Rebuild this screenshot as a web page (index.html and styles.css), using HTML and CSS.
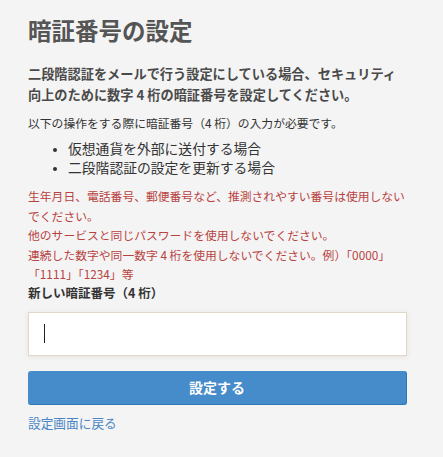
FILE: index.html
```html
<!DOCTYPE html>
<html lang="ja">
<head>
    <meta charset="UTF-8">
    <meta name="viewport" content="width=device-width, initial-scale=1.0">
    <title>暗証番号の設定</title>
    <link rel="stylesheet" href="styles.css">
</head>
<body>
    <div class="container">
        <h1>暗証番号の設定</h1>

        <p class="lead">二段階認証をメールで行う設定にしている場合、セキュリティ向上のために数字 4 桁の暗証番号を設定してください。</p>

        <p class="note">以下の操作をする際に暗証番号（4 桁）の入力が必要です。</p>
        <ul class="cases">
            <li>仮想通貨を外部に送付する場合</li>
            <li>二段階認証の設定を更新する場合</li>
        </ul>

        <div class="warnings">
            <p>生年月日、電話番号、郵便番号など、推測されやすい番号は使用しないでください。</p>
            <p>他のサービスと同じパスワードを使用しないでください。</p>
            <p>連続した数字や同一数字 4 桁を使用しないでください。例）「0000」「1111」「1234」等</p>
        </div>

        <div class="form-group">
            <label for="pin">新しい暗証番号（4 桁）</label>
            <div class="input-wrap">
                <input type="password" id="pin" maxlength="4">
                <span class="caret"></span>
            </div>
        </div>

        <button id="submitBtn">設定する</button>

        <a class="back" href="#">設定画面に戻る</a>
    </div>
</body>
</html>
```

FILE: styles.css
```css
body {
    font-family: "Noto Sans CJK JP", "Noto Sans", sans-serif;
    margin: 0;
    padding: 12px 36px 0 28px;
    background: #f4f4f4;
    color: #444;
}

.container {
    max-width: 379px;
}

h1 {
    margin: 0 0 16px;
    font-size: 23.5px;
    line-height: 36px;
    font-weight: 700;
    color: #555;
}

.lead {
    margin: 0 0 8px;
    font-size: 13.2px;
    line-height: 20.5px;
    font-weight: 700;
    color: #4a4a4a;
}

.note {
    margin: 0;
    font-size: 11.8px;
    line-height: 20px;
    color: #333;
}

.cases {
    margin: 6px 0 9px;
    padding-left: 40px;
    font-size: 13.8px;
    line-height: 19px;
    color: #333;
}

.cases li::marker {
    font-size: 11px;
}

.warnings p {
    margin: 0;
    font-size: 11.8px;
    line-height: 19.5px;
    color: #b8423f;
}

label {
    display: block;
    font-size: 12.5px;
    line-height: 18px;
    font-weight: 700;
    color: #333;
    margin-bottom: 10px;
}

.input-wrap {
    position: relative;
}

input {
    display: block;
    box-sizing: border-box;
    width: 100%;
    height: 44px;
    padding: 0 16px;
    border: 1px solid #e2d8ca;
    background: #fff;
    box-shadow: 0 1px 5px rgba(120, 100, 70, 0.12);
    font-family: inherit;
    font-size: 14px;
    outline: none;
}

.caret {
    position: absolute;
    left: 16px;
    top: 12px;
    width: 1px;
    height: 19px;
    background: #222;
}

button {
    display: block;
    width: 100%;
    height: 34px;
    margin-top: 15px;
    border: none;
    border-bottom: 1px solid #2d78b4;
    border-right: 1px solid #2d78b4;
    border-radius: 3px;
    background: #468bca;
    color: #fff;
    font-family: inherit;
    font-size: 14px;
    font-weight: 700;
    cursor: pointer;
}

.back {
    display: inline-block;
    margin-top: 8px;
    font-size: 12.7px;
    line-height: 20px;
    color: #4a86c5;
    text-decoration: none;
}
```
